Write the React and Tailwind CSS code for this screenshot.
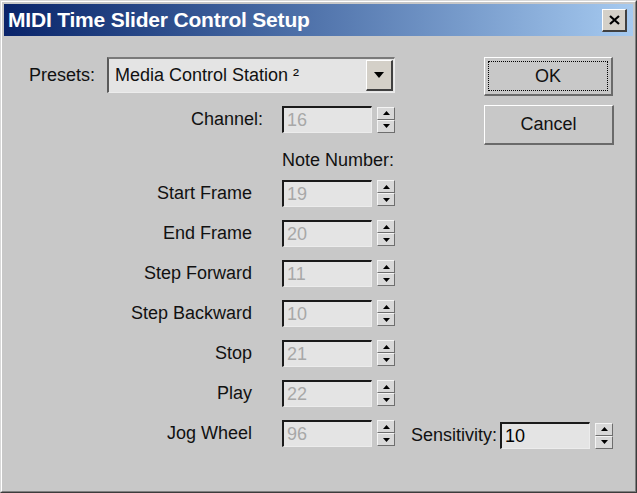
import React from "react";

const FONT = { fontFamily: '"Liberation Sans", Arial, sans-serif' };

function SpinButtons() {
  return (
    <div className="flex flex-col w-[18px] h-[26px]">
      <div className="flex-1 flex items-center justify-center bg-[#d8d8d8] border-t border-l border-t-[#f4f4f4] border-l-[#f4f4f4] border-b border-r border-b-[#6e6e6e] border-r-[#6e6e6e]">
        <svg width="7" height="4" viewBox="0 0 7 4"><polygon points="3.5,0 7,4 0,4" fill="#000" /></svg>
      </div>
      <div className="flex-1 flex items-center justify-center bg-[#d8d8d8] border-t border-l border-t-[#f4f4f4] border-l-[#f4f4f4] border-b border-r border-b-[#6e6e6e] border-r-[#6e6e6e]">
        <svg width="7" height="4" viewBox="0 0 7 4"><polygon points="0,0 7,0 3.5,4" fill="#000" /></svg>
      </div>
    </div>
  );
}

function Spinner({ value, enabled }) {
  return (
    <div className="flex items-center gap-[5px]">
      <div
        className={
          "w-[90px] h-[27px] bg-[#e4e4e4] border-t-2 border-l-2 border-t-[#1a1a1a] border-l-[#1a1a1a] border-b border-r border-b-[#ececec] border-r-[#ececec] flex items-center pl-[3px] text-[18px] leading-none " +
          (enabled ? "text-black" : "text-[#a8a8a8]")
        }
      >
        {value}
      </div>
      <SpinButtons />
    </div>
  );
}

function Row({ label, value }) {
  return (
    <div className="flex items-center h-[26px]">
      <div className="w-[248px] text-right text-[18px] text-[#111]">{label}</div>
      <div className="ml-[30px]">
        <Spinner value={value} />
      </div>
    </div>
  );
}

export default function App() {
  const rows = [
    ["Start Frame", "19"],
    ["End Frame", "20"],
    ["Step Forward", "11"],
    ["Step Backward", "10"],
    ["Stop", "21"],
    ["Play", "22"],
  ];
  return (
    <div style={FONT} className="w-[637px] h-[493px] border border-t-[#d8d8d8] border-l-[#d8d8d8] border-r-[#3c3c3c] border-b-[#3c3c3c]">
      <div className="w-full h-full border border-t-white border-l-white border-r-[#808080] border-b-[#808080] p-[2px] bg-[#c8c8c8] flex flex-col">
        {/* Title bar */}
        <div className="h-[32px] flex items-center justify-between bg-gradient-to-r from-[#0a246a] to-[#a6caf0] pl-[4px] pr-[6px]">
          <span className="text-white font-bold text-[21px] tracking-[-0.2px]">MIDI Time Slider Control Setup</span>
          <div className="w-[25px] h-[23px] bg-[#d4d0c8] border-t border-l border-t-white border-l-white border-b-2 border-r-2 border-b-[#404040] border-r-[#404040] flex items-center justify-center">
            <svg width="11" height="10" viewBox="0 0 11 10">
              <path d="M1 1 L10 9 M10 1 L1 9" stroke="#000" strokeWidth="2.2" />
            </svg>
          </div>
        </div>

        {/* Body */}
        <div className="flex-1 pt-[21px] text-[18px] text-[#111]">
          <div className="flex">
            <div className="flex flex-col">
              <div className="flex items-center h-[36px]">
                <div className="pl-[25px] w-[103px]">Presets:</div>
                <div className="w-[288px] h-[36px] bg-[#e4e4e4] border-t-2 border-l-2 border-t-[#7a7a7a] border-l-[#5a5a5a] border-b border-r border-b-[#ececec] border-r-[#ececec] flex items-center justify-between pl-[6px] pr-[1px]">
                  <span>Media Control Station ²</span>
                  <div className="w-[27px] h-[31px] bg-[#d4d0c8] border-t border-l border-t-white border-l-white border-b-2 border-r-2 border-b-[#404040] border-r-[#404040] flex items-center justify-center">
                    <svg width="10" height="6" viewBox="0 0 10 6"><polygon points="0,0 10,0 5,6" fill="#000" /></svg>
                  </div>
                </div>
              </div>
              <div className="flex items-center h-[27px] mt-[13px]">
                <div className="w-[259px] text-right">Channel:</div>
                <div className="ml-[19px]">
                  <Spinner value="16" />
                </div>
              </div>
            </div>
            <div className="ml-[89px] flex flex-col gap-[9px]">
              <button className="w-[129px] h-[39px] bg-[#c8c8c8] border-t border-l border-t-white border-l-white border-b-2 border-r-2 border-b-[#6a6a6a] border-r-[#6a6a6a] p-[3px]">
                <div className="w-full h-full border border-dotted border-black flex items-center justify-center text-[18px]">OK</div>
              </button>
              <button className="w-[130px] h-[40px] bg-[#c8c8c8] border-t border-l border-t-white border-l-white border-b-2 border-r-2 border-b-[#6a6a6a] border-r-[#6a6a6a] flex items-center justify-center text-[18px]">
                Cancel
              </button>
            </div>
          </div>

          <div className="pl-[278px] mt-[2px] h-[26px] flex items-center">Note Number:</div>

          <div className="flex flex-col gap-[14px] mt-[7px]">
            {rows.map(([l, v]) => (
              <Row key={l} label={l} value={v} />
            ))}
            <div className="flex items-center h-[26px]">
              <div className="w-[248px] text-right">Jog Wheel</div>
              <div className="ml-[30px]">
                <Spinner value="96" />
              </div>
              <div className="ml-[16px] mt-[5px] flex items-center">
                <span className="mr-[3px]">Sensitivity:</span>
                <Spinner value="10" enabled />
              </div>
            </div>
          </div>
        </div>
      </div>
    </div>
  );
}
